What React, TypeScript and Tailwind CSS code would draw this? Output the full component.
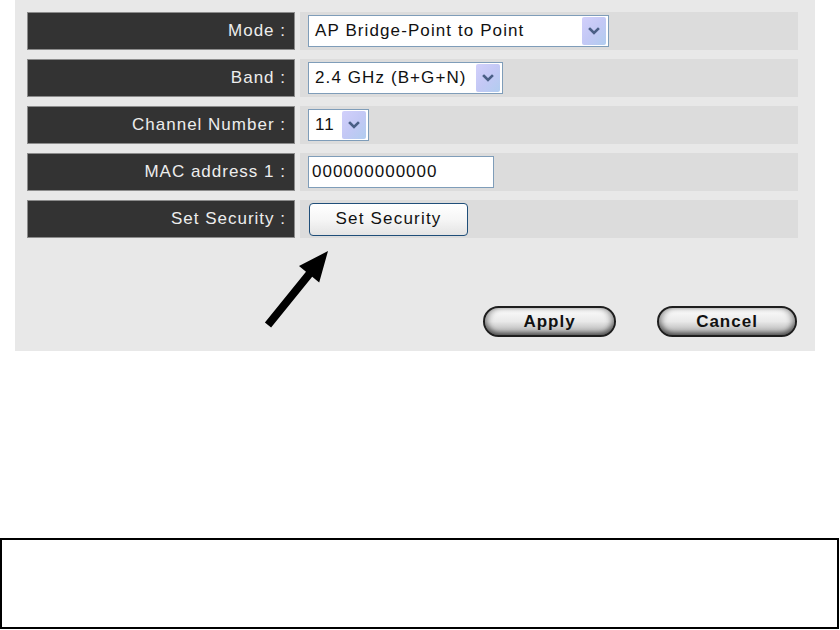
import React from "react";

const font = "font-['Liberation_Sans',Arial,sans-serif]";

function Chevron() {
  return (
    <svg width="12" height="8" viewBox="0 0 12 8">
      <polyline points="2,2 6,6 10,2" fill="none" stroke="#4a5f86" strokeWidth="2.6" strokeLinecap="square" />
    </svg>
  );
}

function FakeSelect({ value, width }: { value: string; width: string }) {
  return (
    <div className={`${width} h-[32px] border border-[#7f9db9] bg-white flex items-center`}>
      <span className="pl-[6px] text-[17px] tracking-[1.1px] text-[#111] whitespace-nowrap">{value}</span>
      <div className="ml-auto mr-[2px] w-[24px] h-[28px] flex items-center justify-center rounded-[2px] bg-linear-to-br from-[#d2d0fb] via-[#c3c8f5] to-[#b1cdef]">
        <Chevron />
      </div>
    </div>
  );
}

function Row({ label, children }: { label: string; children: React.ReactNode }) {
  return (
    <div className="flex h-[38px] gap-[5px]">
      <div className="w-[268px] bg-[#333333] border border-[#8c8c8c] flex items-center justify-end pr-[8px] text-[17px] tracking-[1px] text-[#ededed] whitespace-nowrap">
        {label}
      </div>
      <div className="flex-1 bg-[#dcdcdc] flex items-center pl-[8px]">{children}</div>
    </div>
  );
}

function PillButton({ label, width }: { label: string; width: string }) {
  return (
    <button
      className={`${width} h-[31px] rounded-full border-2 border-[#1e1e1e] bg-linear-to-b from-[#fdfdfd] via-[#e9e9e9] to-[#a9a9a9] shadow-[inset_0_-3px_4px_rgba(0,0,0,0.3),inset_4px_0_5px_rgba(0,0,0,0.25),inset_-4px_0_5px_rgba(0,0,0,0.25)] flex items-center justify-center text-[17px] font-bold tracking-[1px] text-[#111]`}
    >
      {label}
    </button>
  );
}

export default function App() {
  return (
    <div className={`relative w-[840px] h-[630px] bg-white ${font}`}>
      <div className="ml-[15px] w-[800px] h-[351px] bg-[#e8e8e8] pt-[12px] pl-[12px] pr-[17px]">
        <div className="flex flex-col gap-[9px]">
          <Row label="Mode :">
            <FakeSelect value="AP Bridge-Point to Point" width="w-[301px]" />
          </Row>
          <Row label="Band :">
            <FakeSelect value="2.4 GHz (B+G+N)" width="w-[195px]" />
          </Row>
          <Row label="Channel Number :">
            <FakeSelect value="11" width="w-[61px]" />
          </Row>
          <Row label="MAC address 1 :">
            <div className="w-[186px] h-[32px] border border-[#7f9db9] bg-white flex items-center pl-[3px] text-[17px] tracking-[1px] text-[#111]">
              000000000000
            </div>
          </Row>
          <Row label="Set Security :">
            <button className="ml-[1px] w-[159px] h-[33px] rounded-[4px] border border-[#1f4e79] bg-linear-to-b from-white via-[#f6f6f6] to-[#e4e4e4] text-[17px] tracking-[1.2px] text-[#111]">
              Set Security
            </button>
          </Row>
        </div>
        <div className="mt-[68px] flex justify-end gap-[41px] pr-[1px]">
          <PillButton label="Apply" width="w-[133px]" />
          <PillButton label="Cancel" width="w-[140px]" />
        </div>
      </div>

      <div className="mt-[187px] w-[839px] h-[91px] border-2 border-black" />

      <svg className="absolute left-0 top-0 pointer-events-none" width="840" height="360" viewBox="0 0 840 360">
        <polygon
          points="271.1,327.5 312.2,276.8 319.2,282.5 328,251 299,266.1 306,271.8 264.9,322.5"
          fill="#000"
        />
      </svg>
    </div>
  );
}
